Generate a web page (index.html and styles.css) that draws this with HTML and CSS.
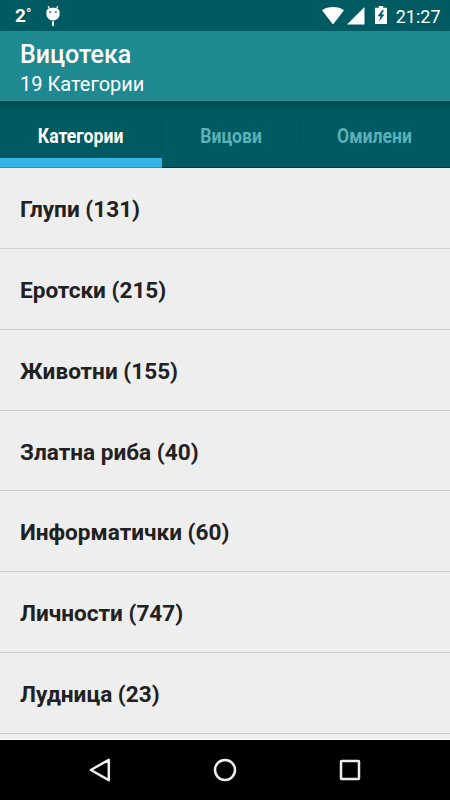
FILE: index.html
```html
<!DOCTYPE html>
<html lang="mk">
<head>
    <meta charset="UTF-8">
    <meta name="viewport" content="width=device-width, initial-scale=1.0">
    <title>Вицотека</title>
    <link rel="stylesheet" href="styles.css">
</head>
<body>
    <div class="status-bar">
        <span class="temperature">2<span class="degree">°</span></span>
        <svg class="icon-debug" width="14" height="20" viewBox="0 0 14 20">
            <path d="M2 0L3.800 3M12 0L10.200 3" stroke="#fff" stroke-width="1.2"/>
            <path d="M.4 6C.4 3 3.500 1.800 7 1.800S13.600 3 13.600 6v2c0 3.500-2.600 6.500-6.600 6.500S.4 11.500 .4 8z" fill="#fff"/>
            <path d="M6 15.300h2V20H6z" fill="#fff"/>
            <path d="M3.200 5.500h2v1.300h-2zM8.800 5.500h2v1.300h-2z" fill="#005a61"/>
        </svg>
        <svg class="icon-wifi" width="22" height="18" viewBox="0 0 22 18">
            <path d="M0 3.200C3 1 7 0 11 0s8 1 11 3.200L11 17.500z" fill="#fff"/>
        </svg>
        <svg class="icon-signal" width="18" height="18" viewBox="0 0 18 18">
            <path d="M17.500 0v17.500H0z" fill="#fff"/>
        </svg>
        <svg class="icon-battery" width="12" height="18" viewBox="0 0 12 18">
            <path d="M3.800 0h4.400v1.700H12V18H0V1.700h3.800z" fill="#fff"/>
            <path d="M7.500 4L2.500 10.300H5.500L4 15.500L9.500 8.500H6.500L9 4.500z" fill="#005a61"/>
        </svg>
        <span class="clock">21:27</span>
    </div>

    <header>
        <h1>Вицотека</h1>
        <p>19 Категории</p>
    </header>

    <nav class="tabs">
        <a class="tab active"><span>Категории</span></a>
        <a class="tab"><span>Вицови</span></a>
        <a class="tab"><span>Омилени</span></a>
    </nav>

    <ul class="category-list">
        <li>Глупи (131)</li>
        <li>Еротски (215)</li>
        <li>Животни (155)</li>
        <li>Златна риба (40)</li>
        <li>Информатички (60)</li>
        <li>Личности (747)</li>
        <li>Лудница (23)</li>
    </ul>

    <footer class="nav-bar">
        <svg width="24" height="24" viewBox="0 0 24 24"><path d="M20.800 1.800v20.400L2.800 12z"/></svg>
        <svg width="24" height="24" viewBox="0 0 24 24"><circle cx="12" cy="12" r="10"/></svg>
        <svg width="24" height="24" viewBox="0 0 24 24"><rect x="3" y="3" width="18" height="18" rx=".5"/></svg>
    </footer>
</body>
</html>
```

FILE: styles.css
```css
* {
    box-sizing: border-box;
}

body {
    font-family: Roboto, sans-serif;
    background-color: #eeeeee;
    margin: 0;
    height: 800px;
    display: flex;
    flex-direction: column;
    overflow: hidden;
}

.status-bar {
    flex: none;
    height: 31px;
    display: flex;
    align-items: flex-start;
    padding: 7px 10px 0 15px;
    background-color: #005a61;
    color: white;
}

.temperature {
    width: 31px;
    font-size: 19px;
    line-height: 18px;
    font-weight: bold;
}

.degree {
    font-size: 14px;
    line-height: 1;
    vertical-align: 3px;
}

.icon-debug {
    margin-top: -1px;
}

.icon-wifi {
    margin-left: auto;
}

.icon-signal {
    margin-left: 3px;
}

.icon-battery {
    margin: -1px 9px 0 10px;
}

.clock {
    margin-right: -0.5px;
    font-size: 18px;
    line-height: 20px;
}

header {
    flex: none;
    height: 70px;
    padding: 8px 20px 0;
    background-color: #1f8991;
    border-bottom: 1px solid #2a8f96;
    color: white;
}

header h1 {
    margin: 0;
    font-size: 25px;
    line-height: 31px;
    font-weight: 500;
}

header p {
    margin: 0;
    font-size: 20px;
    line-height: 29px;
}

.tabs {
    flex: none;
    height: 67px;
    display: grid;
    grid-template-columns: 162px 138px 150px;
    background: linear-gradient(#004a50, #005a61 10px);
    border-bottom: 1px solid #00393e;
}

.tab {
    display: flex;
    align-items: center;
    justify-content: center;
    color: #5eb0b7;
    font-size: 20px;
    font-weight: bold;
    background: linear-gradient(#004f55, #004f55) right 17px / 1px 33px no-repeat;
}

.tab:last-child {
    background: none;
}

.tab span {
    margin: 0 -20px;
    padding-top: 3px;
    transform: scaleX(0.88);
}

.tab.active {
    color: white;
    background: linear-gradient(#004f55, #004f55) right 17px / 1px 33px no-repeat,
        linear-gradient(#33b5e5, #33b5e5) bottom / 100% 9px no-repeat;
    margin-bottom: -1px;
    border-bottom: 1px solid #2493be;
}

.category-list {
    flex: 1;
    min-height: 0;
    margin: 0;
    padding: 0;
    list-style: none;
    border-bottom: 1px solid white;
}

.category-list li {
    height: 80.85px;
    padding: 1px 20px 0;
    border-bottom: 1px solid #d0d0d0;
    color: #212121;
    font-size: 22.600px;
    line-height: 81px;
    font-weight: bold;
}

.nav-bar {
    flex: none;
    height: 60px;
    display: flex;
    align-items: center;
    justify-content: center;
    gap: 101px;
    background-color: black;
}

.nav-bar svg {
    fill: none;
    stroke: #eeeeee;
    stroke-width: 2.500;
    stroke-linejoin: round;
}
```
